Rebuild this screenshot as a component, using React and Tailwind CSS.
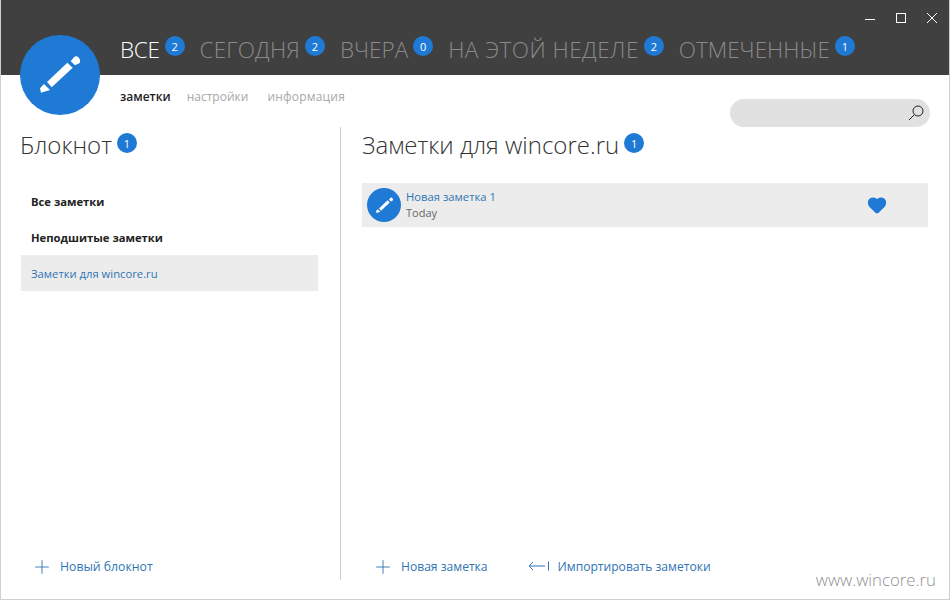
import { Plus, Heart } from 'lucide-react';

const tabs = [
  { label: 'ВСЕ', count: 2, color: 'text-white tracking-[-0.3px]' },
  { label: 'СЕГОДНЯ', count: 2, color: 'text-[#8a8a8a] tracking-[0.15px]' },
  { label: 'ВЧЕРА', count: 0, color: 'text-[#8a8a8a]' },
  { label: 'НА ЭТОЙ НЕДЕЛЕ', count: 2, color: 'text-[#8a8a8a] tracking-[0.47px]' },
  { label: 'ОТМЕЧЕННЫЕ', count: 1, color: 'text-[#8a8a8a]' },
];

function Badge({ value, className = '' }) {
  return (
    <span className={`flex h-5 w-5 shrink-0 items-center justify-center rounded-full bg-[#1f7ad6] text-[11px] leading-none text-white ${className}`}>
      {value}
    </span>
  );
}

function PencilIcon({ className }) {
  return (
    <svg viewBox="0 0 50 50" className={className} fill="#fff">
      <path d="M35.7 11.3 L39 7.2 C40.5 5.6 42.6 6 44 8 C45.4 10 45.4 12 44.7 13 L40 15.3 Z" />
      <path d="M32.3 12.7 L37.7 17.7 L16.7 37.3 L12 32 Z" />
      <path d="M5 38.3 L9 34 L15 40 L6 42.7 Z" />
    </svg>
  );
}

export default function App() {
  return (
    <div className="relative flex h-[600px] w-[950px] flex-col overflow-hidden border-x border-b border-[#cfcfcf] bg-white font-['Open_Sans','Noto_Sans',sans-serif]">
      {/* Header */}
      <div className="-mx-px flex h-[75px] shrink-0 flex-col bg-[#404040] pl-[120px]">
        <div className="flex h-[36px] items-start justify-end gap-[21px] pr-[13px] pt-[13px]">
          <div className="mt-[6px] h-px w-[10px] bg-white" />
          <div className="h-[10px] w-[10px] border border-white" />
          <svg viewBox="0 0 10 10" className="h-[10px] w-[10px]" stroke="#fff" strokeWidth="1">
            <path d="M0 0 L10 10 M10 0 L0 10" />
          </svg>
        </div>
        <div className="flex items-start gap-[15px]">
          {tabs.map((tab) => (
            <div key={tab.label} className="flex items-start gap-[5px]">
              <span className={`-mt-[1px] text-[22.5px] leading-[30px] font-light ${tab.color}`}>
                {tab.label}
              </span>
              <Badge value={tab.count} />
            </div>
          ))}
        </div>
      </div>

      {/* Logo */}
      <div className="absolute left-[19px] top-[35px] flex h-20 w-20 items-center justify-center rounded-full bg-[#1f7ad6]">
        <PencilIcon className="h-[50px] w-[50px]" />
      </div>

      {/* Sub nav */}
      <div className="flex h-[52px] shrink-0 items-start justify-between pl-[119px] pr-[19px]">
        <div className="flex pt-[13px] text-[12px] leading-[18px]">
          <span className="font-semibold text-[#222]">заметки</span>
          <span className="ml-[16px] text-[#a8a8a8]">настройки</span>
          <span className="ml-[19px] text-[#a8a8a8] tracking-[0.2px]">информация</span>
        </div>
        <div className="mt-[24px] flex h-[28px] w-[200px] items-center justify-end rounded-full bg-[#e1e1e1] pr-[5px]">
          <svg viewBox="0 0 18 18" className="h-[18px] w-[18px]" fill="none" stroke="#222" strokeWidth="1">
            <circle cx="11" cy="7" r="5" />
            <path d="M7.5 10.5 L2 16" />
          </svg>
        </div>
      </div>

      {/* Body */}
      <div className="flex h-[453px] shrink-0">
        <div className="flex w-[340px] shrink-0 flex-col border-r border-[#cfcfcf] pl-5 pr-[22px]">
          <div className="flex items-start gap-[5px]">
            <span className="-ml-px text-[24px] leading-[36px] font-light text-[#333]">Блокнот</span>
            <Badge value={1} className="mt-[6px]" />
          </div>
          <div className="mt-[20px] flex flex-col text-[11.25px]">
            <div className="flex h-[36px] items-center pl-[10px] pt-[2px] font-bold text-[#222]">Все заметки</div>
            <div className="flex h-[36px] items-center pl-[10px] pt-[2px] font-bold text-[#222]">Неподшитые заметки</div>
            <div className="flex h-[36px] items-center bg-[#ececec] pl-[10px] pt-[2px] text-[#2f74b5]">Заметки для wincore.ru</div>
          </div>
          <div className="mt-auto flex h-[28px] items-center gap-[7px] pl-[10px] pt-[2px] text-[12.25px] text-[#2f74b5]">
            <Plus size={22} strokeWidth={1} />
            Новый блокнот
          </div>
        </div>

        <div className="flex min-w-0 flex-1 flex-col pl-[21px] pr-[21px]">
          <div className="flex items-start gap-[5px]">
            <span className="text-[24px] leading-[36px] font-light text-[#333]">Заметки для wincore.ru</span>
            <Badge value={1} className="mt-[6px]" />
          </div>
          <div className="mt-[20px] flex h-[44px] items-center bg-[#ececec] pl-[5px]">
            <div className="flex h-[34px] w-[34px] items-center justify-center rounded-full bg-[#1f7ad6]">
              <PencilIcon className="h-[21px] w-[21px]" />
            </div>
            <div className="ml-[5px] flex flex-col leading-[16px]">
              <span className="text-[11.25px] text-[#2f74b5]">Новая заметка 1</span>
              <span className="text-[11px] text-[#666]">Today</span>
            </div>
            <Heart size={20} fill="#1f7ad6" stroke="#1f7ad6" className="ml-auto mr-[41px]" />
          </div>
          <div className="mt-auto flex h-[28px] items-center pl-[10px] pt-[2px] text-[12.1px] text-[#2f74b5]">
            <Plus size={22} strokeWidth={1} />
            <span className="ml-[7px]">Новая заметка</span>
            <svg viewBox="0 0 22 12" className="-mt-[2px] ml-[40px] h-[12px] w-[22px]" fill="none" stroke="#2f74b5" strokeWidth="1">
              <path d="M1 6 H17 M5 2 L1 6 L5 10 M20.5 1.5 V10.5" />
            </svg>
            <span className="ml-[8px]">Импортировать заметоки</span>
          </div>
        </div>
      </div>

      {/* Watermark */}
      <span className="absolute bottom-[8px] right-[13px] text-[16.8px] leading-[22px] font-light text-[#8f8f8f]">www.wincore.ru</span>
    </div>
  );
}
